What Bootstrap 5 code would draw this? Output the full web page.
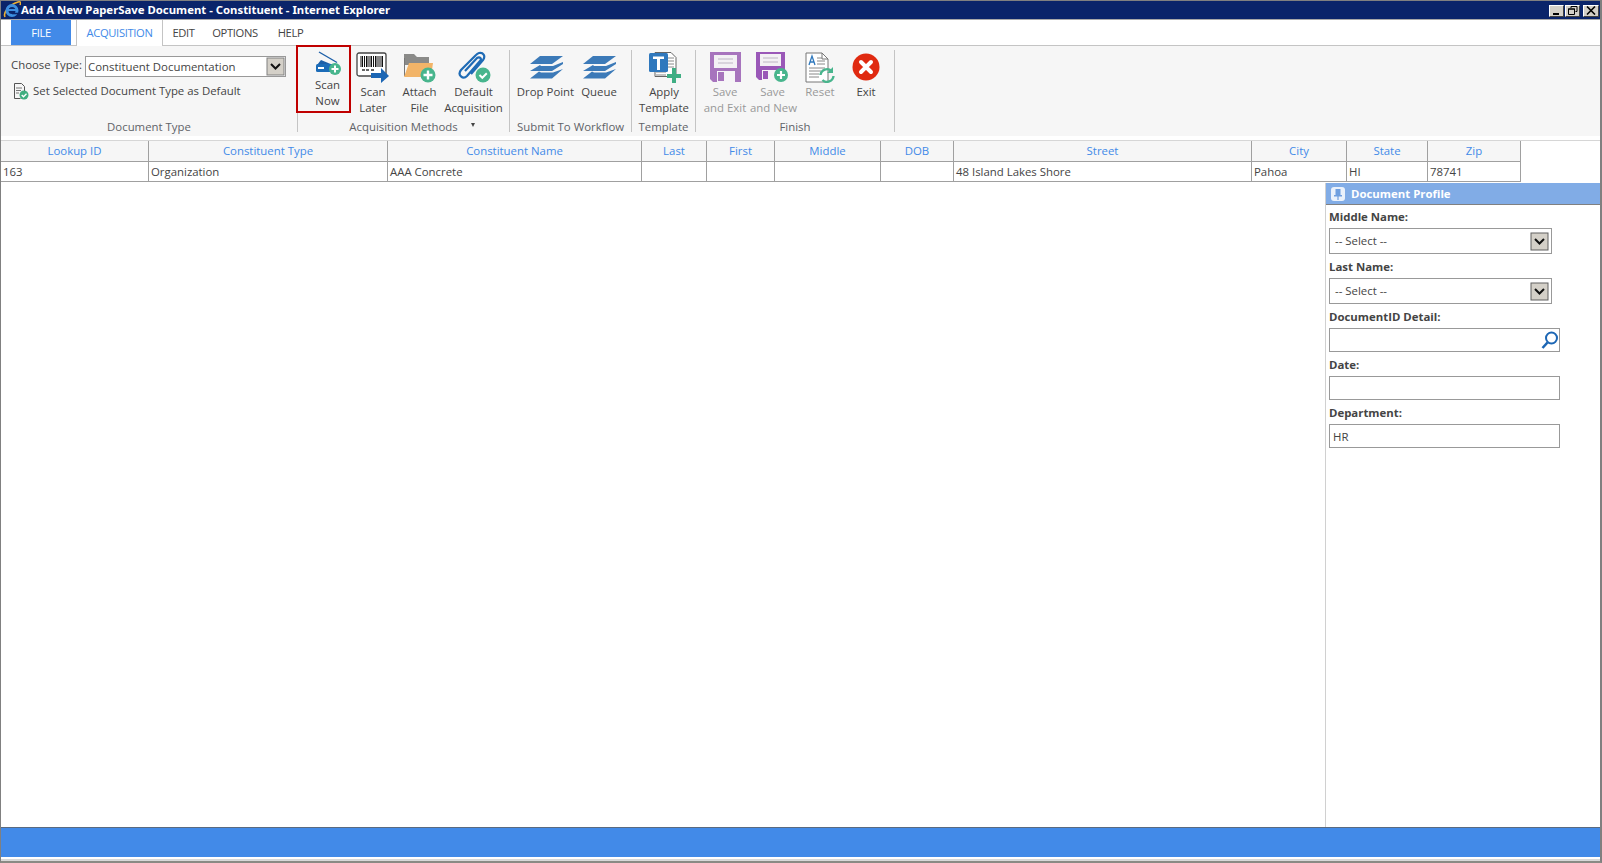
<!DOCTYPE html>
<html lang="en">
<head>
<meta charset="utf-8">
<title>Add A New PaperSave Document - Constituent - Internet Explorer</title>
<link href="https://cdn.jsdelivr.net/npm/bootstrap@5.3.0/dist/css/bootstrap.min.css" rel="stylesheet">
<style>
html,body{height:100%;overflow:hidden}
body{font-family:"Open Sans",Roboto,sans-serif;font-size:11.4px;line-height:16px;color:#444;background:#fff}
.win{height:863px;border-left:1px solid #808080;border-right:2px solid #808080;border-top:1px solid #808080;border-bottom:2px solid #8a8a84;background:#fff}
.titlebar{height:18px;background:#0a246a;color:#fff;font-family:"Noto Sans",sans-serif;font-weight:700;font-size:11.35px;line-height:18px;flex:none}
.ielogo{width:18px;height:18px;margin-left:2px;flex:none}
.wbtns{margin-right:1px;gap:1px}
.wbtn{width:15px;height:12px;padding:0;border:1px solid;border-color:#fff #404040 #404040 #fff;background:#d4d0c8;border-radius:0;display:flex;align-items:center;justify-content:center;margin-top:1px}
.wbtn-x{width:16px;margin-left:2px}
.wbtn svg{display:block}
.tabrow{height:27px;border-top:1px solid #a8a8a8;padding-left:10px;border-bottom:1px solid #c4c4c4;flex:none;flex-wrap:nowrap}
.tabrow .nav-link{color:#444;padding:0;height:25px;line-height:26px;text-align:center;border:0;border-radius:0;font-size:11.2px;letter-spacing:-.35px}
.tabrow .tb-file{width:60px;background:#428ae8;color:#fff;margin-right:5px}
.tabrow .tb-acq{width:87px;background:#fff;color:#428ae8;border:1px solid #c4c4c4;border-bottom:0;height:26px;margin-bottom:-1px;position:relative;border-top:0}
.tabrow .tb-edit{width:41px}
.tabrow .tb-opt{width:62px}
.tabrow .tb-help{width:49px}
.ribbon{height:90px;background:#f6f6f6;flex:none}
.rgroup{height:82px;margin-top:4px;border-right:1px solid #c4c4c4;flex:none;position:relative}
.g1{width:297px}.g2{width:212px}.g3{width:122px}.g4{width:64px}.g5{width:199px}
.rbody{height:69px;flex:none}
.rlabel{height:16px;line-height:16px;text-align:center;color:#5f6368;white-space:nowrap;position:relative}
.ritem{padding:0;border:0;border-radius:0;background:none;font-size:11.4px;line-height:16px;color:#444;text-align:center;white-space:nowrap;flex:none;display:block}
.ritem:disabled{opacity:1;color:#999}
.ico{height:34px;margin-bottom:1px;display:flex;align-items:center;justify-content:center}
.ico svg{display:block}
.rtxt{display:block;margin-top:-1px}
.scanbtn{width:55px;height:68px;margin:-5px 0 0 -2px;padding-left:8px;border:2px solid #c00000;position:relative;z-index:2}
.scanbtn .ico{height:29px;margin-bottom:0}
.wa{width:44px}.wb{width:49px}.wc{width:59px}.wd{width:61px}.we{width:52px}.wf{width:50px}.wg{width:45px}.wh{width:50px}.wi{width:42px}.wq{width:46px}
.g3 .rbody{padding-left:5px}
.g4 .rbody{padding-left:6px}
.g5 .rbody{padding-left:4px}
.caretmk{position:absolute;right:34px;top:4px;width:0;height:0;border-left:2.5px solid transparent;border-right:2.5px solid transparent;border-top:4px solid #444}
.typerow{padding:6px 0 0 10px;height:33px;gap:4px;white-space:nowrap}
.typelbl{width:70px;margin-top:1px}
.sel-type{width:201px;height:21px;padding:0 22px 1px 2px;font-size:11.4px;line-height:17px;color:#444;border:1px solid #999;border-radius:0;font-family:inherit;background-size:19px 19px;background-position:right 0 center;background-repeat:no-repeat;background-image:url("data:image/svg+xml,%3Csvg xmlns='http://www.w3.org/2000/svg' viewBox='0 0 19 19'%3E%3Crect x='1' y='1' width='17' height='17' fill='%23d4d0c8' stroke='%23808080'/%3E%3Cpath d='M5 7l4.5 4.5L14 7' fill='none' stroke='%23111' stroke-width='2'/%3E%3C/svg%3E")}
.defrow{padding-left:12px;gap:4px;height:18px;margin-top:-1px;white-space:nowrap}
.sel-type:focus,.sel-prof:focus,.inp:focus{box-shadow:none;border-color:#999}
.gridwrap{border-top:1px solid #d6d6d6;margin-top:4px;flex:none}
.grid{width:1520px;table-layout:fixed;border-collapse:separate;border-spacing:0;margin:0;--bs-table-bg:transparent;color:#444;font-size:11.4px}
.grid>:not(caption)>*>*{padding:0 2px;border-width:0 1px 1px 0;border-style:solid;border-color:#a0a0a0;line-height:16px;box-shadow:none;overflow:hidden;white-space:nowrap;color:#444}
.grid thead th{height:21px;background:#f6f6f6;color:#428ae8;font-weight:400;text-align:center;vertical-align:middle}
.grid tbody td{height:20px;vertical-align:middle}
.grid col:nth-child(1){width:148px}.grid col:nth-child(2){width:239px}.grid col:nth-child(3){width:254px}
.grid col:nth-child(4){width:65px}.grid col:nth-child(5){width:68px}.grid col:nth-child(6){width:106px}
.grid col:nth-child(7){width:73px}.grid col:nth-child(8){width:298px}.grid col:nth-child(9){width:95px}
.grid col:nth-child(10){width:81px}.grid col:nth-child(11){width:93px}
.stage{min-height:0;padding-top:1px}
.profile{width:275px;border-left:1px solid #d0d0d0;margin-left:auto;flex:none}
.phead{height:22px;background:#81ace6;color:#fff;font-weight:700;line-height:21px;border-bottom:1px solid #808080;padding-left:5px;gap:6px}
.pform{padding:0 0 0 3px}
.flabel{display:block;font-weight:700;color:#444;margin:0;height:24px;line-height:26px}
.flabel:first-child{height:23px;line-height:24px}
.sel-prof{width:223px;height:26px;padding:0 24px 0 5px;font-size:11.4px;color:#444;border:1px solid #999;border-radius:0;font-family:inherit;background-size:19px 19px;background-position:right 2px center;background-repeat:no-repeat;background-image:url("data:image/svg+xml,%3Csvg xmlns='http://www.w3.org/2000/svg' viewBox='0 0 19 19'%3E%3Crect x='1' y='1' width='17' height='17' fill='%23d4d0c8' stroke='%23606060'/%3E%3Cpath d='M5 7l4.5 4.5L14 7' fill='none' stroke='%23111' stroke-width='2'/%3E%3C/svg%3E")}
.inp{width:231px;height:24px;padding:0 3px;font-size:11.4px;color:#444;border:1px solid #999;border-radius:0;font-family:inherit}
.srch{position:relative;width:231px}
.srch svg{position:absolute;right:1px;top:3px}
.bottombar{height:30px;background:#428ae8;border-top:1px solid #5a6a80;flex:none}
.bottomgap{height:4px;background:#fff;border-bottom:2px solid #d8d8d8;flex:none}
</style>
</head>
<body>
<div class="win d-flex flex-column">
  <div class="titlebar d-flex align-items-center">
    <svg class="ielogo" viewBox="0 0 18 18"><path d="M2 16C0 12 5 4 15 1c3-.7 3 1 2 3" fill="none" stroke="#f0b030" stroke-width="1.6"/><circle cx="9" cy="9.500" r="5" fill="none" stroke="#3d8fe0" stroke-width="3"/><path d="M5 9h8.500" stroke="#3d8fe0" stroke-width="2"/><path d="M9 12.500h6" stroke="#0a246a" stroke-width="1.6"/></svg>
    <span class="flex-grow-1">Add A New PaperSave Document - Constituent - Internet Explorer</span>
    <div class="d-flex wbtns">
      <button class="wbtn" aria-label="Minimize"><svg width="10" height="8" viewBox="0 0 10 8"><path d="M1 7h6" stroke="#000" stroke-width="2"/></svg></button>
      <button class="wbtn" aria-label="Restore"><svg width="10" height="9" viewBox="0 0 10 9"><path d="M3 2V.5h6v5H7.500M.5 3h6v5.500H.5z" fill="none" stroke="#000"/><path d="M0 3h7M3 .5h6" stroke="#000"/></svg></button>
      <button class="wbtn wbtn-x" aria-label="Close"><svg width="10" height="9" viewBox="0 0 10 9"><path d="M1 .5l8 8M9 .5l-8 8" stroke="#000" stroke-width="1.600"/></svg></button>
    </div>
  </div>

  <ul class="nav tabrow align-items-start">
    <li class="nav-item"><a class="nav-link tb-file" href="#">FILE</a></li>
    <li class="nav-item"><a class="nav-link tb-acq" href="#">ACQUISITION</a></li>
    <li class="nav-item"><a class="nav-link tb-edit" href="#">EDIT</a></li>
    <li class="nav-item"><a class="nav-link tb-opt" href="#">OPTIONS</a></li>
    <li class="nav-item"><a class="nav-link tb-help" href="#">HELP</a></li>
  </ul>

  <div class="ribbon d-flex">
    <section class="rgroup g1 d-flex flex-column">
      <div class="rbody">
        <div class="typerow d-flex align-items-start"><span class="typelbl">Choose Type:</span>
          <select class="form-select sel-type" aria-label="Choose Type"><option>Constituent Documentation</option></select></div>
        <div class="defrow d-flex align-items-center">
          <svg width="16" height="17" viewBox="0 0 16 17"><path d="M1.500.5h7l3 3v5M1.500.500v15h6" fill="none" stroke="#555"/><path d="M3 5h6M3 7.500h5M3 10h3" stroke="#777"/><circle cx="11" cy="12" r="4.500" fill="#3fae7f"/><path d="M8.700 12l1.800 1.800 3-3" fill="none" stroke="#fff" stroke-width="1.300"/></svg>
          <span>Set Selected Document Type as Default</span>
        </div>
      </div>
      <div class="rlabel">Document Type</div>
    </section>

    <section class="rgroup g2 d-flex flex-column">
      <div class="rbody d-flex align-items-start">
        <button class="ritem scanbtn">
          <span class="ico"><svg width="26" height="25" viewBox="0 0 26 25"><path d="M4 1l18 10.500" stroke="#1c5fa8" stroke-width="1.400"/><path d="M6 9l12 5H2z" fill="#1c5fa8"/><rect x="1" y="13" width="20" height="8" rx="1.500" fill="#1c6cb8"/><rect x="3" y="16" width="6" height="2" fill="#fff"/><circle cx="20" cy="18" r="6" fill="#48b58d"/><path d="M16.500 18h7M20 14.500v7" stroke="#fff" stroke-width="2"/></svg></span>
          <span class="rtxt">Scan<br>Now</span>
        </button>
        <button class="ritem wa">
          <span class="ico"><svg width="34" height="31" viewBox="0 0 34 31"><rect x="1" y="1" width="29" height="23" rx="2" fill="#fff" stroke="#444" stroke-width="1.300"/><path d="M5 4v11M6.500 4v11M8.500 4v11M10.500 4v11M12 4v11M14 4v11M15.500 4v11M17.500 4v11M19.500 4v11M21 4v11M23 4v11M25 4v11M26.500 4v11" stroke="#111"/><path d="M6 18h3M10 18h3M15 18h3" stroke="#666" stroke-width="2"/><path d="M15 21h10v-5l8 8-8 7v-5H15z" fill="#1c66b4"/></svg></span>
          <span class="rtxt">Scan<br>Later</span>
        </button>
        <button class="ritem wb">
          <span class="ico"><svg width="33" height="31" viewBox="0 0 33 31"><path d="M1 2h10l3 3h12v8H1z" fill="#8a8a88"/><path d="M1 6h1v18H1z" fill="#777"/><path d="M6 11h24l-2 14H1z" fill="#f2b468"/><circle cx="25" cy="23" r="7.500" fill="#48b58d"/><path d="M20.500 23h9M25 18.500v9" stroke="#fff" stroke-width="2.400"/></svg></span>
          <span class="rtxt">Attach<br>File</span>
        </button>
        <button class="ritem wc">
          <span class="ico"><svg width="34" height="32" viewBox="0 0 34 32"><path d="M14 23L26 9c3-4 0-8-4-7-2 .5-3 2-4 3L4 19c-4 5 2 10 6 6l13-15c2-2 0-5-3-3L8 20" fill="none" stroke="#1f6bb5" stroke-width="2.200"/><circle cx="26" cy="24" r="7.500" fill="#48b58d"/><path d="M22.500 24l2.800 2.800 4.500-4.500" fill="none" stroke="#fff" stroke-width="2"/></svg></span>
          <span class="rtxt">Default<br>Acquisition</span>
        </button>
      </div>
      <div class="rlabel">Acquisition Methods<span class="caretmk"></span></div>
    </section>

    <section class="rgroup g3 d-flex flex-column">
      <div class="rbody d-flex align-items-start">
        <button class="ritem wd">
          <span class="ico"><svg width="34" height="25" viewBox="0 0 34 25"><path d="M11 1h23L23 9H1z" fill="#3c7ab8"/><path d="M34 7v2l-11 7H1l10-6 1 1h12z" fill="#3c7ab8"/><path d="M34 14l-11 9.500H1l9-7 2 1h12z" fill="#3c7ab8"/></svg></span>
          <span class="rtxt">Drop Point</span>
        </button>
        <button class="ritem wq">
          <span class="ico"><svg width="34" height="25" viewBox="0 0 34 25"><path d="M11 1h23L23 9H1z" fill="#3c7ab8"/><path d="M34 7v2l-11 7H1l10-6 1 1h12z" fill="#3c7ab8"/><path d="M34 14l-11 9.500H1l9-7 2 1h12z" fill="#3c7ab8"/></svg></span>
          <span class="rtxt">Queue</span>
        </button>
      </div>
      <div class="rlabel">Submit To Workflow</div>
    </section>

    <section class="rgroup g4 d-flex flex-column">
      <div class="rbody d-flex align-items-start">
        <button class="ritem we">
          <span class="ico"><svg width="33" height="32" viewBox="0 0 33 32"><path d="M7 1.500h16l5 5v19H7z" fill="#fff" stroke="#666"/><path d="M20 7h6M20 10h6M20 13h6M20 16h6M8 21h10M8 24h10" stroke="#888"/><rect x="1" y="2" width="19" height="19" rx="1.500" fill="#2f78bd"/><path d="M5 5.500h11V8h-4v11H9V8H5z" fill="#fff"/><path d="M24 17h4v6h5v4h-5v5h-4v-5h-5v-4h5z" fill="#3fae83"/></svg></span>
          <span class="rtxt">Apply<br>Template</span>
        </button>
      </div>
      <div class="rlabel">Template</div>
    </section>

    <section class="rgroup g5 d-flex flex-column">
      <div class="rbody d-flex align-items-start">
        <button class="ritem wf" disabled>
          <span class="ico"><svg width="31" height="31" viewBox="0 0 31 31"><path d="M0 0h31v30H3l-3-3z" fill="#a774bd"/><rect x="4" y="3" width="23" height="13" fill="#f3f1f4"/><path d="M8 7h15M8 11h15" stroke="#bdb6c4"/><rect x="7" y="19" width="18" height="11" fill="#f6f4f7"/><rect x="8" y="20" width="6" height="9" fill="#a774bd"/></svg></span>
          <span class="rtxt">Save<br>and Exit</span>
        </button>
        <button class="ritem wg" disabled>
          <span class="ico"><svg width="33" height="31" viewBox="0 0 33 31"><path d="M0 0h29v28H3l-3-3z" fill="#9a58b8"/><rect x="4" y="2" width="21" height="12" fill="#f3f1f4"/><path d="M7 6h15M7 10h15" stroke="#bdb6c4"/><rect x="6" y="18" width="16" height="10" fill="#f6f4f7"/><rect x="7" y="19" width="5" height="8" fill="#9a58b8"/><circle cx="25" cy="23" r="7" fill="#48b58d"/><path d="M21 23h8M25 19v8" stroke="#fff" stroke-width="2.200"/></svg></span>
          <span class="rtxt">Save<br>and New</span>
        </button>
        <button class="ritem wh" disabled>
          <span class="ico"><svg width="32" height="31" viewBox="0 0 32 31"><path d="M2 1h16l6 6v23H2z" fill="#fff" stroke="#777"/><path d="M18 1v6h6" fill="none" stroke="#777"/><path d="M13 6h5M13 9h8M13 12h8M5 16h16M5 19h12M5 22h10M5 25h10" stroke="#888"/><path d="M5 13l3-9 3 9M6 10h4" fill="none" stroke="#2f78bd" stroke-width="1.300"/><path d="M16.500 23a6.500 6.500 0 0 1 11-4" fill="none" stroke="#48b58d" stroke-width="2.400"/><path d="M29 15v6h-6z" fill="#48b58d"/><path d="M29.500 24a6.500 6.500 0 0 1-11 4" fill="none" stroke="#48b58d" stroke-width="2.400"/></svg></span>
          <span class="rtxt">Reset</span>
        </button>
        <button class="ritem wi">
          <span class="ico"><svg width="28" height="28" viewBox="0 0 28 28"><circle cx="14" cy="14" r="13.500" fill="#e02a10"/><path d="M9 9l10 10M19 9L9 19" stroke="#fff" stroke-width="4" stroke-linecap="round"/></svg></span>
          <span class="rtxt">Exit</span>
        </button>
      </div>
      <div class="rlabel">Finish</div>
    </section>
  </div>

  <div class="gridwrap">
    <table class="table grid">
      <colgroup><col><col><col><col><col><col><col><col><col><col><col></colgroup>
      <thead><tr><th>Lookup ID</th><th>Constituent Type</th><th>Constituent Name</th><th>Last</th><th>First</th><th>Middle</th><th>DOB</th><th>Street</th><th>City</th><th>State</th><th>Zip</th></tr></thead>
      <tbody><tr><td>163</td><td>Organization</td><td>AAA Concrete</td><td></td><td></td><td></td><td></td><td>48 Island Lakes Shore</td><td>Pahoa</td><td>HI</td><td>78741</td></tr></tbody>
    </table>
  </div>

  <div class="stage flex-grow-1 d-flex">
    <aside class="profile d-flex flex-column">
      <div class="phead d-flex align-items-center">
        <svg width="14" height="14" viewBox="0 0 14 14"><rect width="14" height="14" rx="3" fill="#eaf1fb"/><path d="M4.500 2h5v6h1.500v1.500H7.600V13h-1.200V9.500H3V8h1.500z" fill="#6f9fdf"/></svg>
        <span>Document Profile</span>
      </div>
      <div class="pform">
        <label class="flabel">Middle Name:</label>
        <select class="form-select sel-prof" aria-label="Middle Name"><option>-- Select --</option></select>
        <label class="flabel">Last Name:</label>
        <select class="form-select sel-prof" aria-label="Last Name"><option>-- Select --</option></select>
        <label class="flabel">DocumentID Detail:</label>
        <div class="srch">
          <input class="form-control inp" aria-label="DocumentID Detail">
          <svg width="18" height="19" viewBox="0 0 18 19"><circle cx="10.500" cy="7" r="5.500" fill="none" stroke="#1c66b4" stroke-width="2"/><path d="M6.500 11.500L1.500 17" stroke="#1c66b4" stroke-width="2.600"/></svg>
        </div>
        <label class="flabel">Date:</label>
        <input class="form-control inp" aria-label="Date">
        <label class="flabel">Department:</label>
        <input class="form-control inp" aria-label="Department" value="HR">
      </div>
    </aside>
  </div>

  <div class="bottombar"></div>
  <div class="bottomgap"></div>
</div>
</body>
</html>
